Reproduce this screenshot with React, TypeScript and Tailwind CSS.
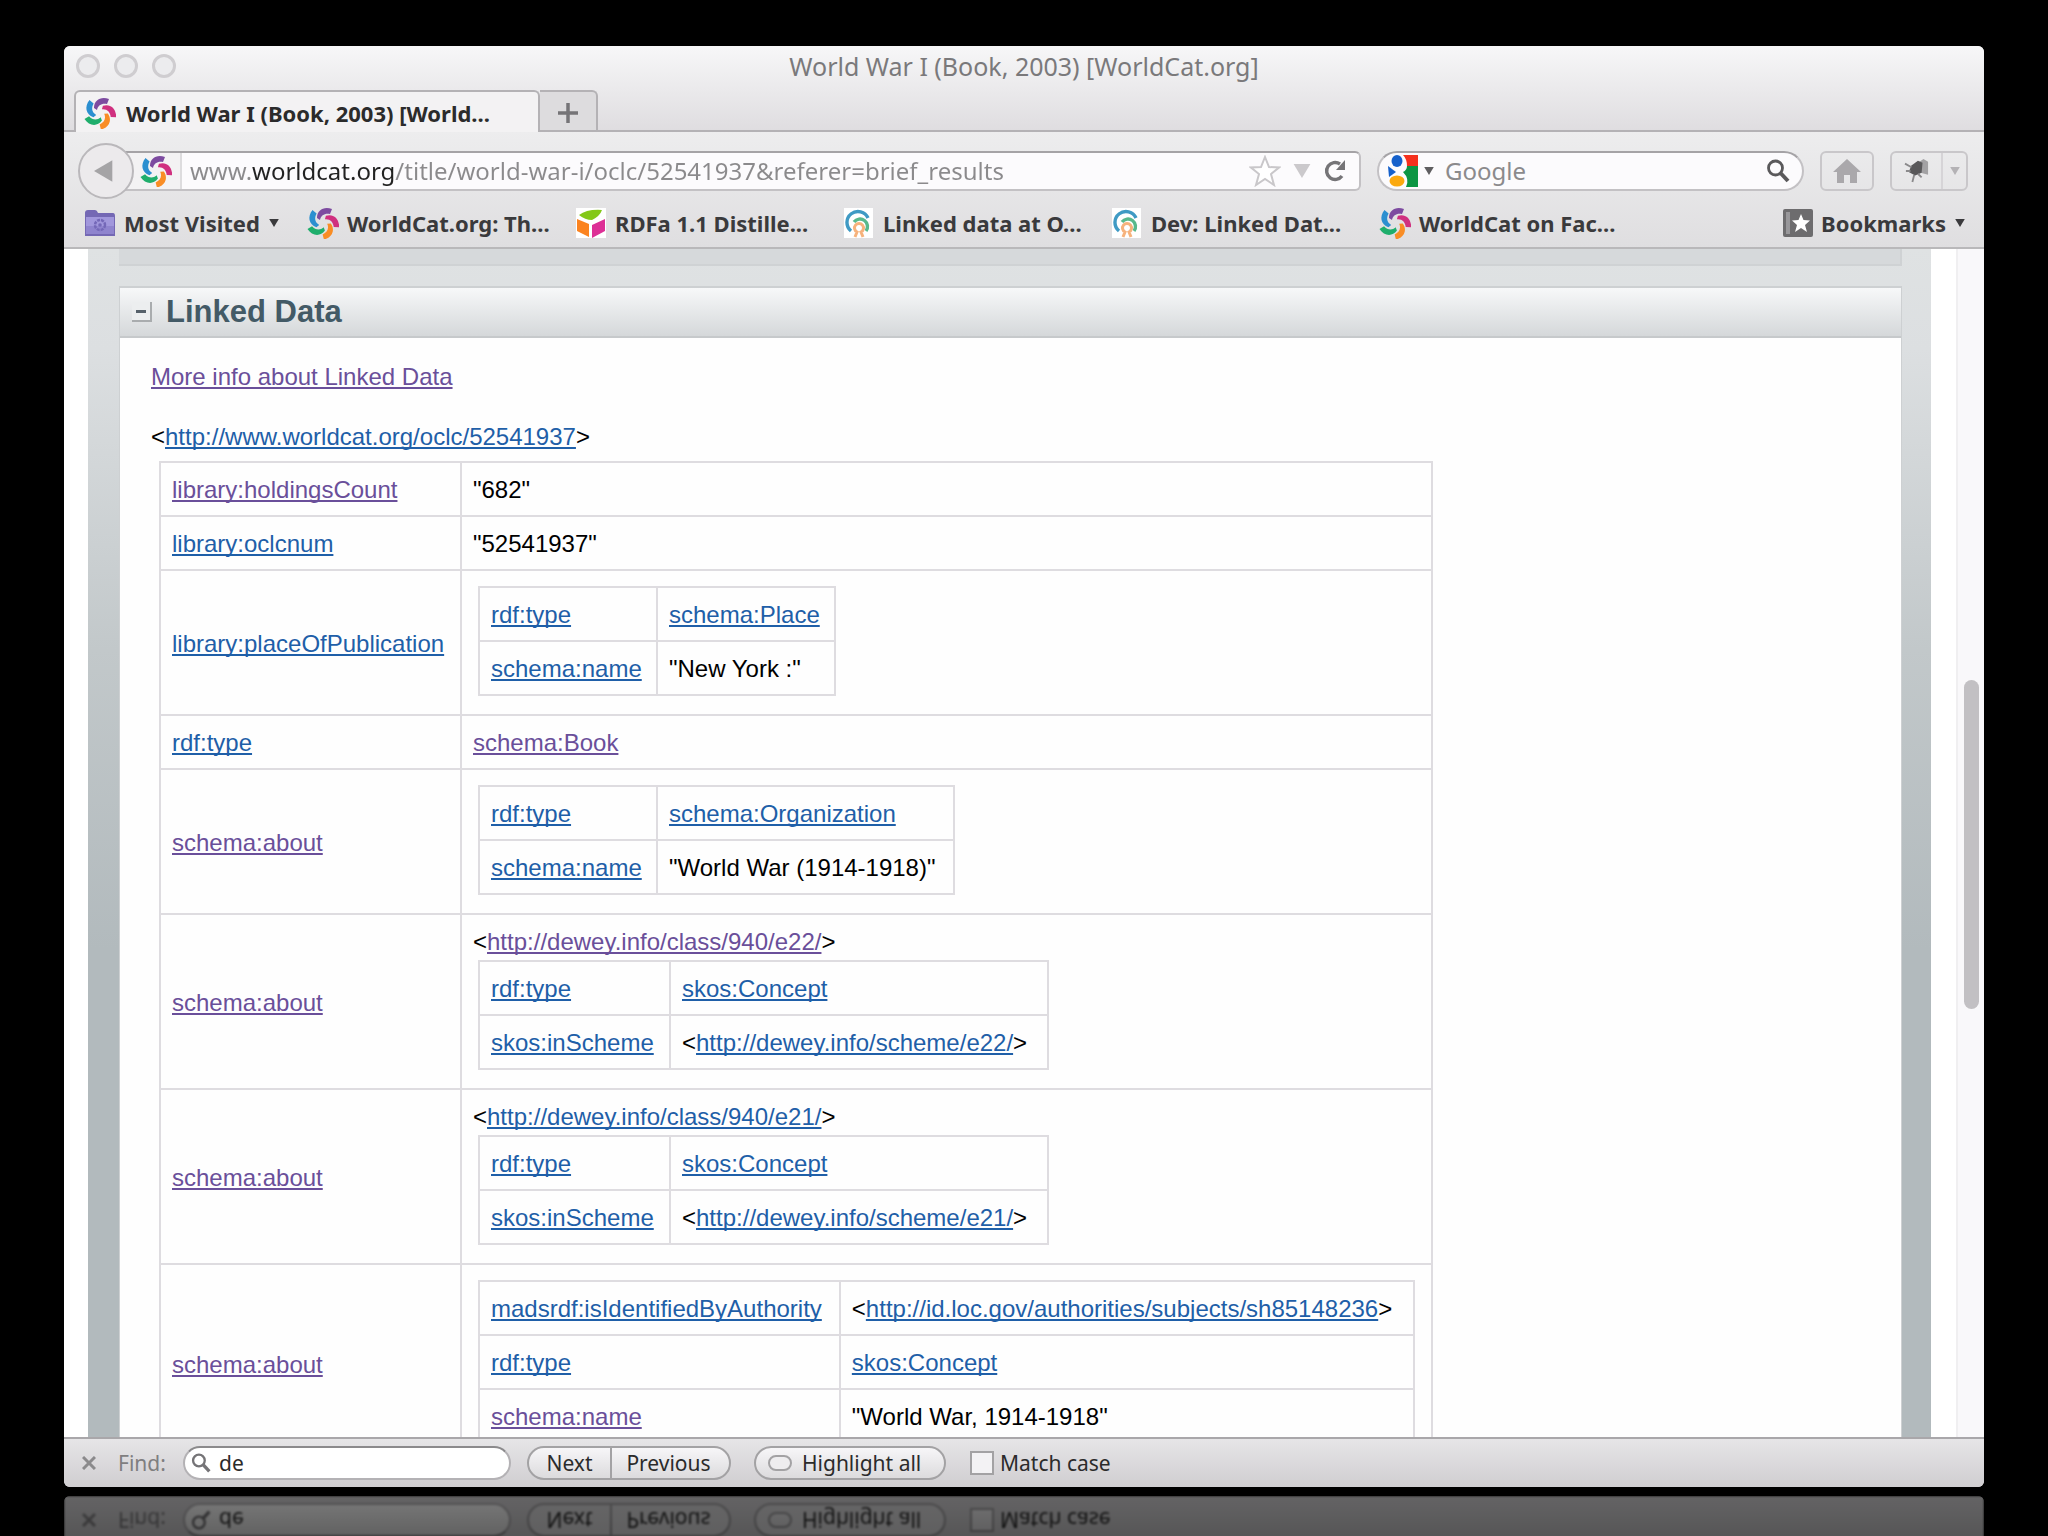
import { useId, useState } from "react";
import type { ReactNode } from "react";

type Value =
  | { kind: "text"; text: string }
  | { kind: "link"; text: string; visited?: boolean }
  | { kind: "uri"; text: string; visited?: boolean }
  | { kind: "node"; uri?: string; visited?: boolean; keyWidth: string; valueWidth: string; rows: Row[] };

type Row = { name: string; visited?: boolean; value: Value };

const text = (t: string): Value => ({ kind: "text", text: t });
const link = (t: string, visited = false): Value => ({ kind: "link", text: t, visited });
const uri = (t: string, visited = false): Value => ({ kind: "uri", text: t, visited });

const ROWS: Row[] = [
  { name: "library:holdingsCount", visited: true, value: text('"682"') },
  { name: "library:oclcnum", value: text('"52541937"') },
  {
    name: "library:placeOfPublication",
    value: {
      kind: "node", keyWidth: "w-[178px]", valueWidth: "w-[178px]",
      rows: [
        { name: "rdf:type", value: link("schema:Place") },
        { name: "schema:name", value: text('"New York :"') },
      ],
    },
  },
  { name: "rdf:type", value: link("schema:Book", true) },
  {
    name: "schema:about", visited: true,
    value: {
      kind: "node", keyWidth: "w-[178px]", valueWidth: "w-[297px]",
      rows: [
        { name: "rdf:type", value: link("schema:Organization") },
        { name: "schema:name", value: text('"World War (1914-1918)"') },
      ],
    },
  },
  {
    name: "schema:about", visited: true,
    value: {
      kind: "node", uri: "http://dewey.info/class/940/e22/", visited: true,
      keyWidth: "w-[191px]", valueWidth: "w-[378px]",
      rows: [
        { name: "rdf:type", value: link("skos:Concept") },
        { name: "skos:inScheme", value: uri("http://dewey.info/scheme/e22/") },
      ],
    },
  },
  {
    name: "schema:about", visited: true,
    value: {
      kind: "node", uri: "http://dewey.info/class/940/e21/",
      keyWidth: "w-[191px]", valueWidth: "w-[378px]",
      rows: [
        { name: "rdf:type", value: link("skos:Concept") },
        { name: "skos:inScheme", value: uri("http://dewey.info/scheme/e21/") },
      ],
    },
  },
  {
    name: "schema:about", visited: true,
    value: {
      kind: "node", keyWidth: "w-[362px]", valueWidth: "w-[576px]",
      rows: [
        { name: "madsrdf:isIdentifiedByAuthority", value: uri("http://id.loc.gov/authorities/subjects/sh85148236") },
        { name: "rdf:type", value: link("skos:Concept") },
        { name: "schema:name", visited: true, value: text('"World War, 1914-1918"') },
      ],
    },
  },
];

const SWIRL = ["#7d4ba0", "#d0307f", "#f98d25", "#1fae6c", "#2b8fd0"];

function WorldCatLogo() {
  return (
    <svg viewBox="0 0 32 32" className="size-8 shrink-0" aria-hidden="true">
      {SWIRL.map((c, i) => (
        <path
          key={c}
          transform={`rotate(${i * 72} 16 16)`}
          d="M25 2 C17 -1 10 3 10 11 L13 13 C14 8 18 6 23 7Z"
          fill={c}
        />
      ))}
    </svg>
  );
}

function FolderIcon() {
  return (
    <svg viewBox="0 0 32 30" className="h-[30px] w-8 shrink-0" aria-hidden="true">
      <path d="M1 5 Q1 2 4 2 H11 Q13 2 14 5 H29 Q31 5 31 8 V28 H1Z" fill="#7468b4" />
      <path d="M2 9 H30 V26 H2Z" fill="#a197dc" />
      <path d="M2 18 H30 V26 H2Z" fill="#8f84ce" />
      <circle cx="16" cy="17" r="5" fill="none" stroke="#7468b8" strokeWidth="2.5" strokeDasharray="3 1" />
      <circle cx="16" cy="17" r="1.8" fill="#7468b8" />
    </svg>
  );
}

function CubeIcon() {
  return (
    <svg viewBox="0 0 32 32" className="size-8 shrink-0" aria-hidden="true">
      <rect x="1" y="1" width="30" height="30" fill="#fff" />
      <path d="M4 8 Q12 2 27 3 Q25 9 17 13 Q10 13 4 8Z" fill="#84c818" />
      <path d="M2 12 L14 17 V30 L2 24Z" fill="#fb8320" />
      <path d="M17 18 L30 12 V24 L17 31Z" fill="#dd2f96" />
    </svg>
  );
}

function OclcIcon() {
  return (
    <svg viewBox="0 0 32 32" className="size-8 shrink-0" aria-hidden="true">
      <rect x="1" y="1" width="29" height="30" fill="#fff" />
      <g fill="none">
        <path d="M8 24 A11 11 0 1 1 25 11" stroke="#3f9ac4" strokeWidth="3.4" />
        <path d="M11 15 A7.500 7.500 0 1 1 23 24" stroke="#58b98c" strokeWidth="3.4" />
        <path d="M12 30 L14 25 A4.500 4.500 0 1 1 18 25 L20 30" stroke="#f6b27c" strokeWidth="3" />
      </g>
    </svg>
  );
}

function GoogleIcon() {
  return (
    <svg viewBox="0 0 32 32" className="size-8 shrink-0" aria-hidden="true">
      <path d="M16 0 H31 V11 H20 Q20 4 16 0Z" fill="#f5301d" />
      <path d="M20 11 H31 V32 H19 Q23 24 16 17 Q20 15 20 11Z" fill="#0c9643" />
      <ellipse cx="10" cy="6" rx="5.5" ry="6" fill="#1560cb" />
      <path d="M1 11 L9 17 L2 22Z" fill="#1560cb" />
      <ellipse cx="10" cy="26" rx="7.5" ry="5.5" fill="#fba90e" />
    </svg>
  );
}

function Magnifier({ className }: { className: string }) {
  return (
    <svg viewBox="0 0 24 24" className={className} fill="none" stroke="currentColor" aria-hidden="true">
      <circle cx="9.5" cy="9" r="7" strokeWidth="2.8" />
      <path d="M14.5 14 L22 22" strokeWidth="4" />
    </svg>
  );
}

function Caret({ className }: { className: string }) {
  return (
    <svg viewBox="0 0 12 10" className={className} fill="currentColor" aria-hidden="true">
      <path d="M0 0 H12 L6 10Z" />
    </svg>
  );
}

function Anchor({ children, visited }: { children: ReactNode; visited?: boolean }) {
  return (
    <a
      href="#"
      className={
        visited
          ? "text-[#6a4f9a] underline decoration-2 underline-offset-2 [text-decoration-skip-ink:none]"
          : "text-[#1f5fa8] underline decoration-2 underline-offset-2 [text-decoration-skip-ink:none]"
      }
    >
      {children}
    </a>
  );
}

function ValueView({ value }: { value: Value }) {
  if (value.kind === "text") return <>{value.text}</>;
  if (value.kind === "link") return <Anchor visited={value.visited}>{value.text}</Anchor>;
  if (value.kind === "uri") return <>&lt;<Anchor visited={value.visited}>{value.text}</Anchor>&gt;</>;
  return (
    <>
      {value.uri && <div>&lt;<Anchor visited={value.visited}>{value.uri}</Anchor>&gt;</div>}
      <table className="mx-[5px] mt-[3px] mb-2 border-collapse">
        <tbody>
          {value.rows.map(r => (
            <tr key={r.name}>
              <th scope="row" className={`${value.keyWidth} border-2 border-[#dedce0] px-[11px] pt-3 pb-2.5 text-left font-normal`}>
                <Anchor visited={r.visited}>{r.name}</Anchor>
              </th>
              <td className={`${value.valueWidth} border-2 border-[#dedce0] px-[11px] pt-3 pb-2.5`}>
                <ValueView value={r.value} />
              </td>
            </tr>
          ))}
        </tbody>
      </table>
    </>
  );
}

function TabStrip() {
  return (
    <div className="flex h-[42px] shrink-0 items-stretch border-b-2 border-[#b4b2b5] pl-2.5">
      <div className="-mb-0.5 flex w-[466px] items-center gap-2.5 rounded-t-md border-2 border-b-0 border-[#b4b2b5] bg-[#f3f2f3] px-2 pt-0.5">
        <WorldCatLogo />
        <span className="truncate text-[22px] leading-8 font-bold text-[#2b2b2b]">World War I (Book, 2003) [World...</span>
      </div>
      <button aria-label="New tab" className="flex w-[58px] items-center justify-center rounded-tr-md border-2 border-b-0 border-l-0 border-[#b4b2b5] bg-[#dddcde] pt-1 text-[#757477]">
        <svg viewBox="0 0 20 20" className="size-5" stroke="currentColor" strokeWidth="3.5" aria-hidden="true">
          <path d="M10 0 V20 M0 10 H20" />
        </svg>
      </button>
    </div>
  );
}

function NavBar() {
  return (
    <div className="flex h-[78px] shrink-0 items-center pr-4 pl-3.5">
      <div className="flex flex-1 items-center">
        <button aria-label="Back" className="z-10 flex size-14 shrink-0 items-center justify-center rounded-full border-2 border-[#bab8bb] bg-[#eceaec]">
          <svg viewBox="0 0 24 26" className="h-[26px] w-6 pr-1" fill="#a5a4a6" aria-hidden="true">
            <path d="M0 13 L22 0 V26Z" />
          </svg>
        </button>
        <div className="-ml-4 flex h-10 flex-1 items-center rounded-r-md border-2 border-[#c3c1c4] border-t-[#a5a3a6] bg-[#fcfbfd]">
          <div className="flex h-full w-[62px] shrink-0 items-center justify-end border-r-2 border-[#dddcde] bg-[#f3f2f3] pr-2">
            <WorldCatLogo />
          </div>
          <input
            aria-label="Address"
            defaultValue="www.worldcat.org/title/world-war-i/oclc/52541937&referer=brief_results"
            className="min-w-0 flex-1 bg-[linear-gradient(90deg,#8b8a8c_70px,#222_70px,#222_213px,#8b8a8c_213px)] bg-clip-text px-2 text-2xl text-transparent outline-none"
          />
          <div className="flex shrink-0 items-center gap-3 pr-3">
            <svg viewBox="0 0 32 32" className="size-8" fill="#fff" stroke="#c9c7ca" strokeWidth="2" aria-hidden="true">
              <path d="M16 2 L20 12 L30 12.500 L22 19 L25 30 L16 24 L7 30 L10 19 L2 12.500 L12 12Z" />
            </svg>
            <Caret className="h-3.5 w-[18px] text-[#cbc9cc]" />
            <button aria-label="Reload">
              <svg viewBox="0 0 24 24" className="size-6" fill="none" stroke="#757477" strokeWidth="3.4" aria-hidden="true">
                <path d="M19 17 A8.500 8.500 0 1 1 17 5" />
                <path d="M13 11 H22 V1Z" fill="#757477" stroke="none" />
              </svg>
            </button>
          </div>
        </div>
      </div>
      <div className="ml-4 flex h-10 w-[427px] shrink-0 items-center rounded-full border-2 border-[#c3c1c4] border-t-[#a5a3a6] bg-[#fcfbfd] pr-3 pl-2">
        <GoogleIcon />
        <Caret className="ml-1 h-2 w-3 text-[#5f5e60]" />
        <input aria-label="Search" placeholder="Google" className="ml-2.5 min-w-0 flex-1 text-2xl outline-none placeholder:text-[#8b8a8c]" />
        <Magnifier className="size-6 text-[#5a595b]" />
      </div>
      <button aria-label="Home" className="ml-4 flex h-10 w-[54px] shrink-0 items-center justify-center rounded-md border-2 border-[#c9c7ca]">
        <svg viewBox="0 0 28 24" className="h-6 w-7" fill="#aaa8ab" aria-hidden="true">
          <path d="M14 0 L28 13 H24 V24 H17 V16 H11 V24 H4 V13 H0Z" />
        </svg>
      </button>
      <div className="ml-4 flex h-10 w-[78px] shrink-0 rounded-md border-2 border-[#c9c7ca]">
        <button aria-label="Add-on" className="flex w-[51px] items-center justify-center border-r-2 border-[#d6d4d7]">
          <svg viewBox="0 0 28 26" className="h-6 w-7" aria-hidden="true">
            <path d="M14 5 L21 0 L26 3 L26 17 L18 15Z" fill="#a3a2a4" />
            <path d="M8 7 L15 2 L20 4 L19 15 L12 18 L5 14Z" fill="#59585a" />
            <path d="M1 5 L8 9 M2 13 L7 13 M9 25 L11 17 M15 16 L19 20" stroke="#8b8a8c" strokeWidth="2" />
          </svg>
        </button>
        <button aria-label="Add-on menu" className="flex flex-1 items-center justify-center">
          <Caret className="h-2 w-2.5 text-[#b4b2b5]" />
        </button>
      </div>
    </div>
  );
}

const BOOKMARKS = [
  { label: "WorldCat.org: Th...", icon: <WorldCatLogo /> },
  { label: "RDFa 1.1 Distille...", icon: <CubeIcon /> },
  { label: "Linked data at O...", icon: <OclcIcon /> },
  { label: "Dev: Linked Dat...", icon: <OclcIcon /> },
  { label: "WorldCat on Fac...", icon: <WorldCatLogo /> },
];

function BookmarksBar() {
  return (
    <div className="flex h-[39px] shrink-0 items-center border-b-2 border-[#b9b8ba] pr-[18px] pb-3 pl-5 text-[22px] leading-8 font-bold text-[#3a3a3c]">
      <button className="flex w-[223px] shrink-0 items-center gap-2">
        <FolderIcon />
        Most Visited
        <Caret className="h-2 w-3" />
      </button>
      {BOOKMARKS.map(b => (
        <a key={b.label} href="#" className="flex w-[268px] items-center gap-2">
          {b.icon}
          {b.label}
        </a>
      ))}
      <button className="ml-auto flex items-center gap-2">
        <svg viewBox="0 0 30 28" className="h-7 w-[30px]" aria-hidden="true">
          <rect width="30" height="28" rx="2" fill="#6d6c6e" />
          <rect x="3" y="3" width="4" height="22" fill="#98979a" />
          <path d="M18 5 L20.500 11 L27 11.500 L22 16 L24 23 L18 19 L12 23 L14 16 L9 11.500 L15.500 11Z" fill="#fff" />
        </svg>
        Bookmarks
        <Caret className="h-2 w-3" />
      </button>
    </div>
  );
}

function LinkedDataPage() {
  return (
    <div className="flex min-h-0 flex-1 overflow-hidden bg-white font-['Liberation_Sans',Arial,sans-serif] text-2xl leading-[30px] text-black">
      <div className="ml-6 flex min-w-0 flex-1 flex-col bg-[linear-gradient(180deg,#dfe2e3_0px,#dcdfe1_100px,#c2c8ca_400px,#b2babd_700px)] pr-[29px] pl-[31px]">
        <div className="h-[17px] shrink-0 border-r-2 border-b-2 border-[#cfd2d4] bg-[#d6d9db]" />
        <section className="mt-5 min-h-0 flex-1 overflow-hidden border-x border-t-2 border-[#cdd0d2] bg-[#fefefe]">
          <h2 className="flex h-[50px] items-center gap-3.5 border-b-2 border-[#c6c9cb] bg-linear-to-b from-[#f7f8f9] to-[#d5d8da] px-3 text-[31px] font-bold text-[#435a66]">
            <button aria-label="Collapse" className="flex size-5 items-center justify-center border-r-2 border-b-2 border-[#a9acae] bg-[#eceeef]">
              <span className="h-[3px] w-2.5 bg-[#56616a]" />
            </button>
            Linked Data
          </h2>
          <div className="px-[31px] pt-6">
            <p className="mb-[30px]"><Anchor visited>More info about Linked Data</Anchor></p>
            <p>&lt;<Anchor>http://www.worldcat.org/oclc/52541937</Anchor>&gt;</p>
            <table className="mt-[9px] ml-2 border-collapse">
              <tbody>
                {ROWS.map((r, i) => (
                  <tr key={i}>
                    <th scope="row" className="w-[301px] border-2 border-[#dedce0] px-[11px] pt-3 pb-2.5 text-left font-normal">
                      <Anchor visited={r.visited}>{r.name}</Anchor>
                    </th>
                    <td className="w-[971px] border-2 border-[#dedce0] px-[11px] pt-3 pb-2.5">
                      <ValueView value={r.value} />
                    </td>
                  </tr>
                ))}
              </tbody>
            </table>
          </div>
        </section>
      </div>
      <div className="ml-[25px] w-7 shrink-0 border-l-2 border-[#f0eff1] bg-[#f9f8fa] pt-[431px] pl-1.5">
        <div className="h-[329px] w-[15px] rounded-full bg-[#c2c0c3]" />
      </div>
    </div>
  );
}

function FindBar() {
  const id = useId();
  const [query, setQuery] = useState("de");
  return (
    <div className="flex h-[50px] shrink-0 items-center border-t-2 border-[#a9a7aa] bg-linear-to-b from-[#e6e5e7] to-[#d0ced1] pl-[18px] text-[21px] leading-7 text-[#2b2b2b]">
      <button aria-label="Close find bar" className="text-[#8b8a8c]">
        <svg viewBox="0 0 14 14" className="size-3.5" stroke="currentColor" strokeWidth="3" aria-hidden="true">
          <path d="M1 1 L13 13 M13 1 L1 13" />
        </svg>
      </button>
      <label htmlFor={`${id}-find`} className="ml-[22px] w-[65px] text-[#7f7e80]">Find:</label>
      <div className="flex h-[34px] w-[328px] items-center gap-2 rounded-full border-2 border-[#b4b2b5] border-t-[#8b8a8c] bg-white px-1.5">
        <Magnifier className="size-5 text-[#757477]" />
        <input id={`${id}-find`} value={query} onChange={e => setQuery(e.target.value)} className="min-w-0 flex-1 outline-none" />
      </div>
      <div className="ml-4 flex h-[34px] w-[204px] rounded-full border-2 border-[#a3a2a4] bg-linear-to-b from-[#f7f6f8] to-[#dcdbdd]">
        <button className="w-[83px] border-r-2 border-[#a3a2a4]">Next</button>
        <button className="flex-1 pr-1">Previous</button>
      </div>
      <button className="ml-[23px] flex h-[34px] w-[192px] items-center gap-2.5 rounded-full border-2 border-[#a3a2a4] bg-linear-to-b from-[#f7f6f8] to-[#dcdbdd] pl-3">
        <span className="h-4 w-6 rounded-full border-2 border-[#a3a2a4] bg-[#eeedef]" />
        Highlight all
      </button>
      <input id={`${id}-case`} type="checkbox" className="ml-6 size-6 appearance-none border-2 border-[#a3a2a4] bg-[#f3f2f4]" />
      <label htmlFor={`${id}-case`} className="ml-1.5">Match case</label>
    </div>
  );
}

export default function App() {
  return (
    <div className="flex h-screen flex-col overflow-hidden bg-black px-16 pt-[46px] font-['Noto_Sans','Open_Sans',sans-serif]">
      <main className="flex min-h-0 flex-1 flex-col overflow-hidden rounded-md bg-[#e2e1e3]">
        <header className="flex h-[203px] shrink-0 flex-col bg-[linear-gradient(180deg,#f7f7f8_0px,#dfdde0_84px,#ededee_86px,#dfdee0_203px)]">
          <div className="flex h-11 shrink-0 items-center px-3 pb-1">
            <div className="flex w-[76px] gap-3.5">
              <span className="size-6 shrink-0 rounded-full border-3 border-[#cfcdd0] bg-[#ececee]" />
              <span className="size-6 shrink-0 rounded-full border-3 border-[#cfcdd0] bg-[#ececee]" />
              <span className="size-6 shrink-0 rounded-full border-3 border-[#cfcdd0] bg-[#ececee]" />
            </div>
            <h1 className="flex-1 pr-[76px] text-center text-[25px] leading-9 text-[#7a797b]">World War I (Book, 2003) [WorldCat.org]</h1>
          </div>
          <TabStrip />
          <NavBar />
          <BookmarksBar />
        </header>
        <LinkedDataPage />
        <FindBar />
      </main>
      <div className="relative mt-[9px] h-10 shrink-0 overflow-hidden rounded-t-md" aria-hidden="true" inert>
        <div className="-scale-y-100 blur-[1px]">
          <FindBar />
        </div>
        <div className="absolute inset-0 bg-linear-to-b from-black/52 to-black/62" />
      </div>
    </div>
  );
}
